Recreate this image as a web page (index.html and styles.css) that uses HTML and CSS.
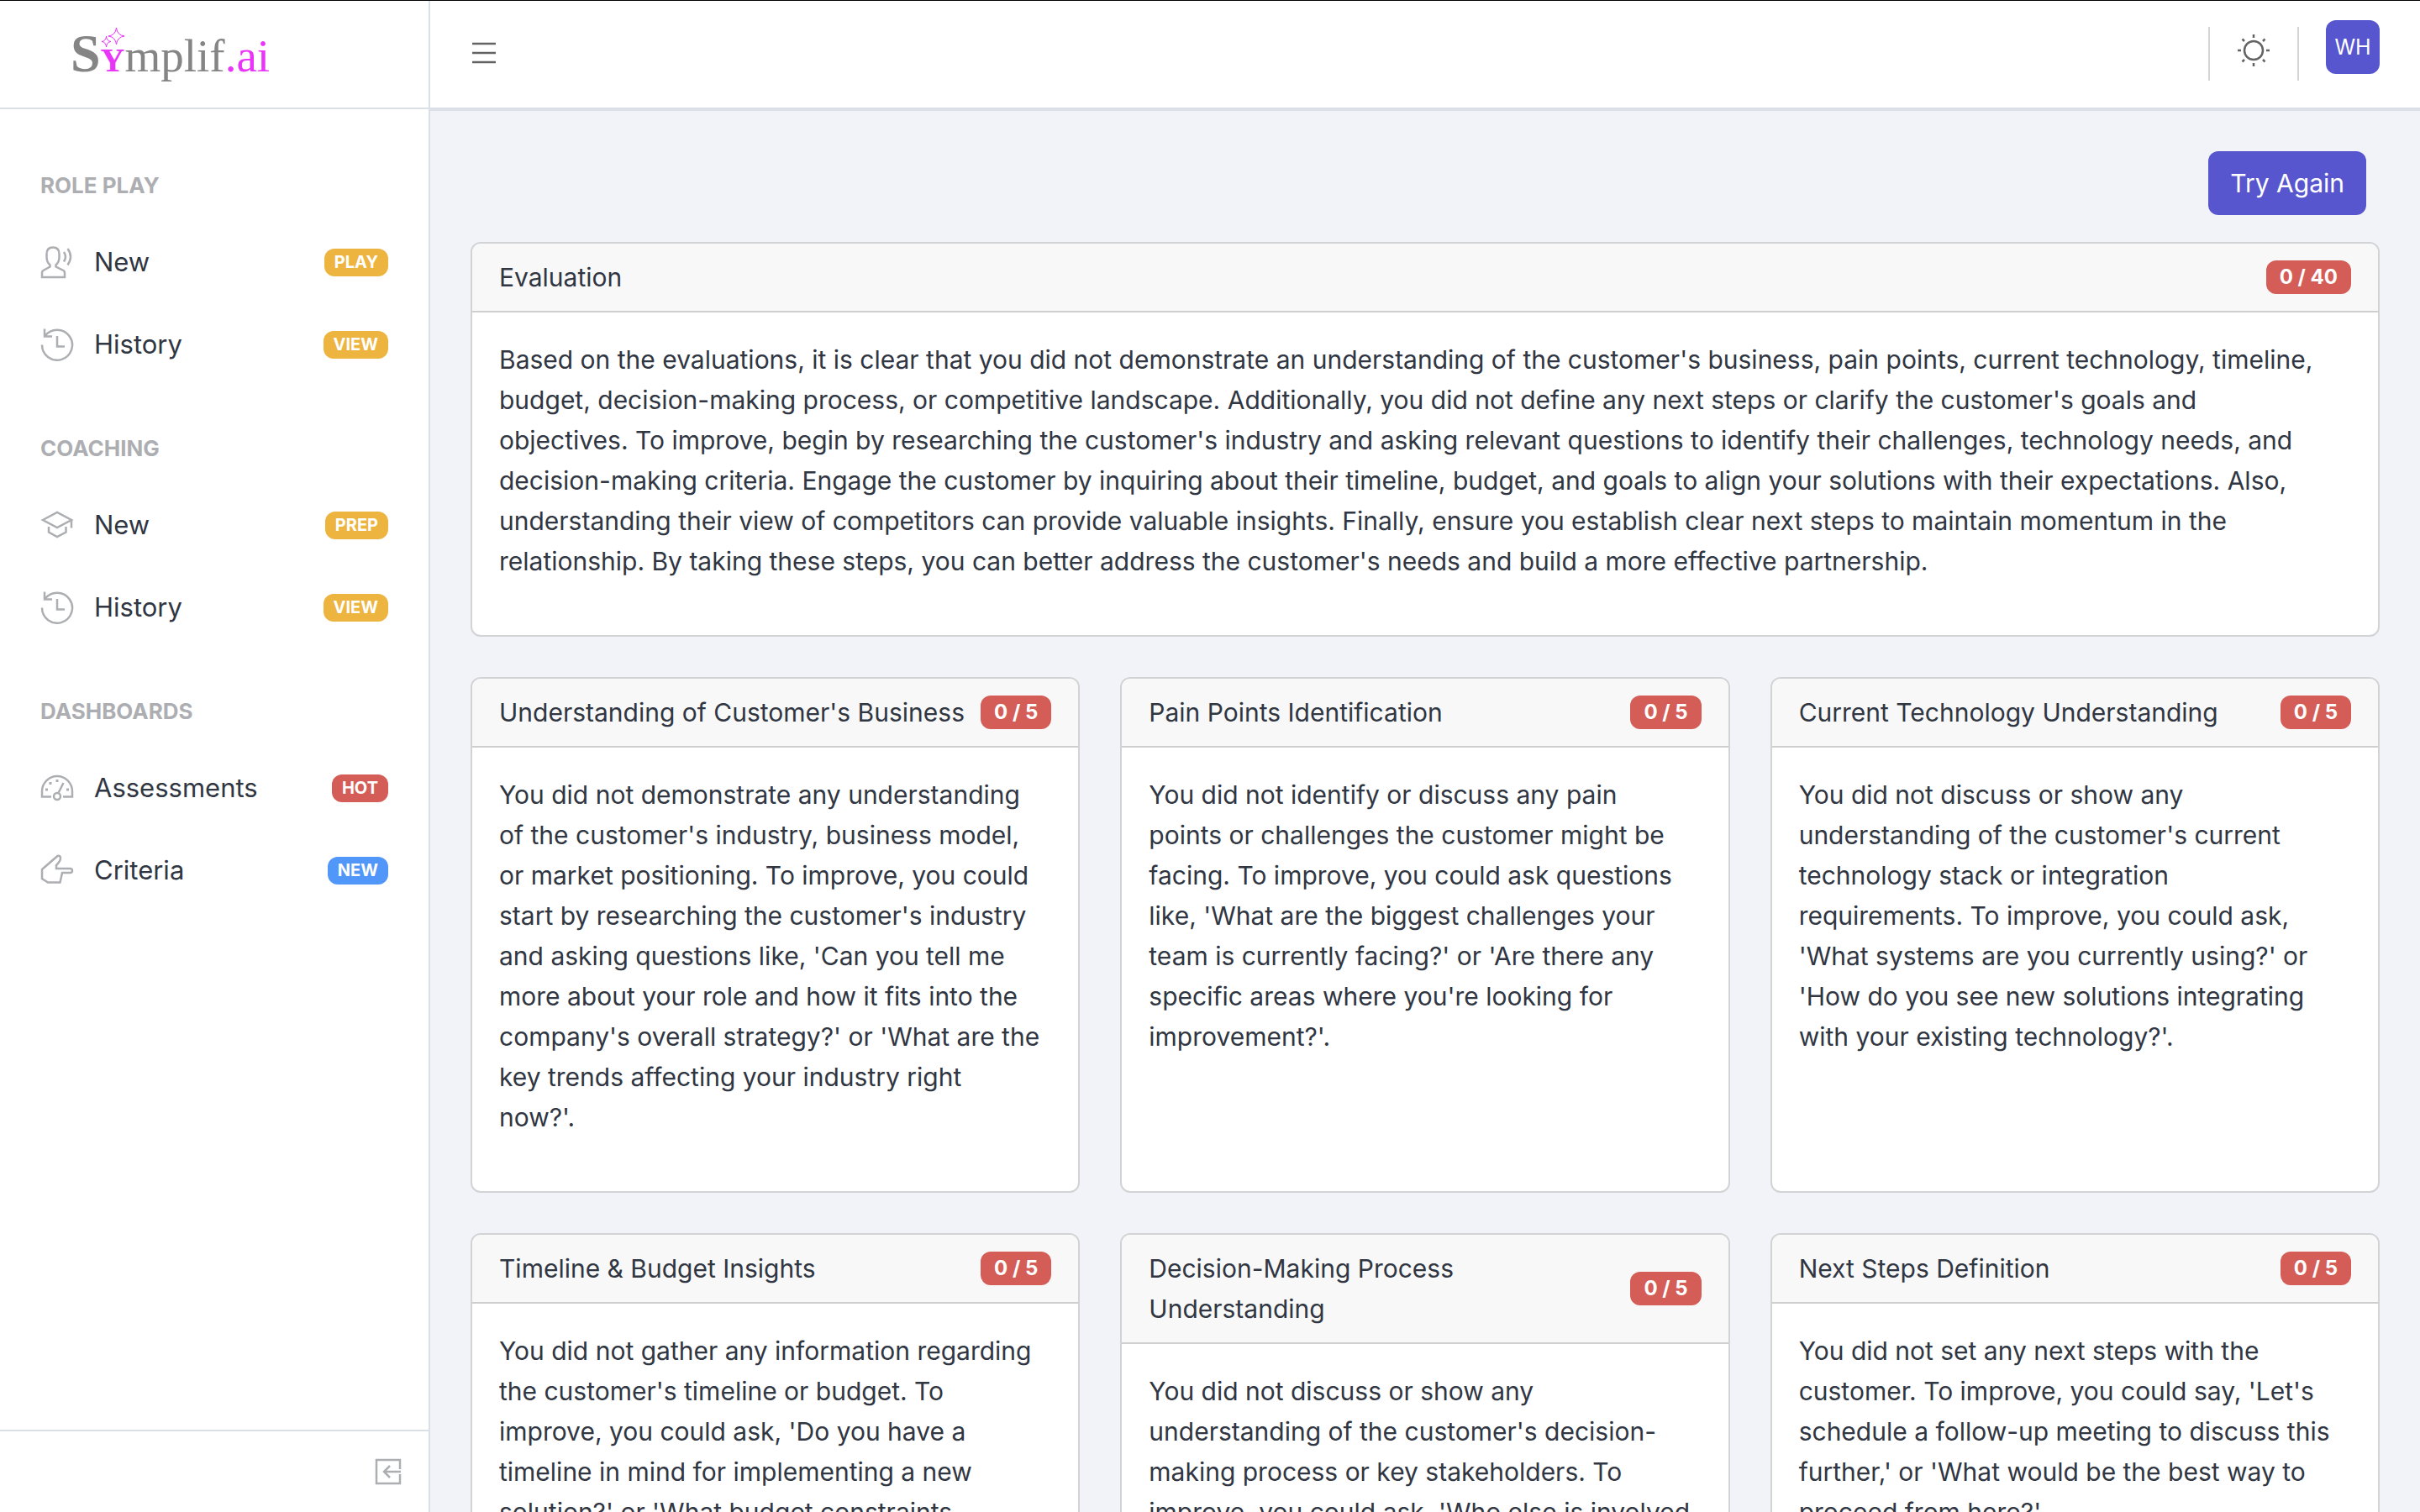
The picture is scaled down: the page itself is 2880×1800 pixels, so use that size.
FILE: index.html
```html
<!DOCTYPE html>
<html lang="en">
  <head>
    <meta charset="utf-8">
    <meta name="viewport" content="width=device-width, initial-scale=1">
    <title>Symplif.ai</title>
    <link rel="stylesheet" href="styles.css">
  </head>
  <body>
    <svg class="sprite" aria-hidden="true">
      <symbol id="icon-voice" viewBox="0 0 40 40">
        <path d="M2 38V32.500Q2 31 3.500 30L11.500 25.500V23.500Q7.500 20 7.500 14V10.500Q7.500 2.500 15 2.500T22.500 10.500V14Q22.500 20 18.500 23.500V25.500L27.500 30Q29 31 29 32.500V38Z"/>
        <path d="M28 8Q32 13.500 28 19.500M32.500 4Q39.500 13.500 32.500 23.500"/>
      </symbol>
      <symbol id="icon-history" viewBox="0 0 40 40">
        <path d="M5 1.500V10.500H14M5.500 10A18 18 0 1 1 2 20.500M20 10V22.500H29"/>
      </symbol>
      <symbol id="icon-cap" viewBox="0 0 40 40">
        <path d="M3 14L20 5L37 14L20 23ZM37 14V23.500M10 22V28.500L20 34L30.500 28.500V22"/>
      </symbol>
      <symbol id="icon-gauge" viewBox="0 0 40 40">
        <path d="M13 30.500H2V24A18 18 0 0 1 38 24V30.500H27M21.500 26L27.500 14"/>
        <circle cx="20" cy="30" r="4"/>
        <path d="M6 22H9M10.500 14.500H13.500M18.500 11.500H21.500M31 22H34" stroke-width="3"/>
      </symbol>
      <symbol id="icon-hand" viewBox="0 0 40 40">
        <path d="M2 19L20.500 3Q24 2 24 6Q24 9 19 14V18H35.500Q38 18 38 20.500T35.500 23H26L23.500 34.500H9L2 30Z"/>
      </symbol>
    </svg>

    <div class="app">
      <aside class="sidebar">
        <div class="sidebar-header">
          <a class="brand" href="#"><span class="brand-s">S</span><span class="brand-y">Y<svg class="brand-stars" viewBox="0 0 28 24"><path d="M18.500 0Q19.500 9 28 10Q19.500 11 18.500 20Q17.500 11 9 10Q17.500 9 18.500 0ZM6.500 10Q7 16 12 16.500Q7 17 6.500 23Q6 17 1 16.500Q6 16 6.500 10Z"/></svg></span>mplif<span class="brand-ai">.ai</span></a>
        </div>
        <nav class="sidebar-nav">
          <h6 class="nav-title">ROLE PLAY</h6>
          <a class="nav-link" href="#"><svg class="nav-icon"><use href="#icon-voice"/></svg>New<span class="badge badge-sm warning">PLAY</span></a>
          <a class="nav-link" href="#"><svg class="nav-icon"><use href="#icon-history"/></svg>History<span class="badge badge-sm warning">VIEW</span></a>
          <h6 class="nav-title">COACHING</h6>
          <a class="nav-link" href="#"><svg class="nav-icon"><use href="#icon-cap"/></svg>New<span class="badge badge-sm warning">PREP</span></a>
          <a class="nav-link" href="#"><svg class="nav-icon"><use href="#icon-history"/></svg>History<span class="badge badge-sm warning">VIEW</span></a>
          <h6 class="nav-title">DASHBOARDS</h6>
          <a class="nav-link" href="#"><svg class="nav-icon"><use href="#icon-gauge"/></svg>Assessments<span class="badge badge-sm danger">HOT</span></a>
          <a class="nav-link" href="#"><svg class="nav-icon"><use href="#icon-hand"/></svg>Criteria<span class="badge badge-sm info">NEW</span></a>
        </nav>
        <div class="sidebar-footer">
          <button class="icon-button" type="button" aria-label="Collapse sidebar">
            <svg class="fold-icon" viewBox="0 0 32 32"><path d="M30 13V2H2V30H30V19M31 16H11M18 9L11 16L18 23"/></svg>
          </button>
        </div>
      </aside>

      <div class="wrapper">
        <header class="header">
          <button class="icon-button" type="button" aria-label="Toggle sidebar">
            <svg class="menu-icon" viewBox="0 0 32 32"><path d="M2 5H30M2 16H30M2 27H30"/></svg>
          </button>
          <div class="header-tools">
            <span class="divider"></span>
            <button class="icon-button" type="button" aria-label="Theme">
              <svg class="sun-icon" viewBox="0 0 40 40"><circle cx="20" cy="20" r="11"/><path d="M20 1V5M20 35V39M1 20H5M35 20H39M6.500 6.500L9 9M31 31L33.500 33.500M33.500 6.500L31 9M9 31L6.500 33.500"/></svg>
            </button>
            <span class="divider"></span>
            <button class="avatar" type="button">WH</button>
          </div>
        </header>

        <main class="content">
          <div class="actions">
            <button class="btn-primary" type="button">Try Again</button>
          </div>

          <section class="card">
            <div class="card-header">Evaluation<span class="badge danger">0 / 40</span></div>
            <div class="card-body">
              <p>Based on the evaluations, it is clear that you did not demonstrate an understanding of the customer's business, pain points, current technology, timeline,<br>
              budget, decision-making process, or competitive landscape. Additionally, you did not define any next steps or clarify the customer's goals and<br>
              objectives. To improve, begin by researching the customer's industry and asking relevant questions to identify their challenges, technology needs, and<br>
              decision-making criteria. Engage the customer by inquiring about their timeline, budget, and goals to align your solutions with their expectations. Also,<br>
              understanding their view of competitors can provide valuable insights. Finally, ensure you establish clear next steps to maintain momentum in the<br>
              relationship. By taking these steps, you can better address the customer's needs and build a more effective partnership.</p>
            </div>
          </section>

          <div class="card-grid">
            <section class="card">
              <div class="card-header">Understanding of Customer's Business<span class="badge danger">0 / 5</span></div>
              <div class="card-body">
                <p>You did not demonstrate any understanding<br>
                of the customer's industry, business model,<br>
                or market positioning. To improve, you could start by researching the customer's industry and asking questions like, 'Can you tell me more about your role and how it fits into the company's overall strategy?' or 'What are the key trends affecting your industry right<br>
                now?'.</p>
              </div>
            </section>
            <section class="card">
              <div class="card-header">Pain Points Identification<span class="badge danger">0 / 5</span></div>
              <div class="card-body">
                <p>You did not identify or discuss any pain<br>
                points or challenges the customer might be facing. To improve, you could ask questions like, 'What are the biggest challenges your team is currently facing?' or 'Are there any specific areas where you're looking for improvement?'.</p>
              </div>
            </section>
            <section class="card">
              <div class="card-header">Current Technology Understanding<span class="badge danger">0 / 5</span></div>
              <div class="card-body">
                <p>You did not discuss or show any understanding of the customer's current technology stack or integration<br>
                requirements. To improve, you could ask,<br>
                'What systems are you currently using?' or<br>
                'How do you see new solutions integrating with your existing technology?'.</p>
              </div>
            </section>
            <section class="card">
              <div class="card-header">Timeline &amp; Budget Insights<span class="badge danger">0 / 5</span></div>
              <div class="card-body">
                <p>You did not gather any information regarding the customer's timeline or budget. To improve, you could ask, 'Do you have a timeline in mind for implementing a new solution?' or 'What budget constraints</p>
              </div>
            </section>
            <section class="card">
              <div class="card-header">Decision-Making Process Understanding<span class="badge danger">0 / 5</span></div>
              <div class="card-body">
                <p>You did not discuss or show any understanding of the customer's decision-making process or key stakeholders. To improve, you could ask, 'Who else is involved</p>
              </div>
            </section>
            <section class="card">
              <div class="card-header">Next Steps Definition<span class="badge danger">0 / 5</span></div>
              <div class="card-body">
                <p>You did not set any next steps with the customer. To improve, you could say, 'Let's schedule a follow-up meeting to discuss this further,' or 'What would be the best way to proceed from here?'.</p>
              </div>
            </section>
          </div>
        </main>
      </div>
    </div>
  </body>
</html>
```
FILE: styles.css
```css
* {
  box-sizing: border-box;
}
body {
  margin: 0;
  font-family: Inter, "Liberation Sans", sans-serif;
  font-size: 30px;
  line-height: 48px;
  color: #303642;
  background: #f2f3f8;
}
button {
  font: inherit;
  border: 0;
  cursor: pointer;
}
.sprite {
  display: none;
}
.app {
  display: flex;
  height: 100vh;
  border-top: 1px solid #000;
  overflow: hidden;
}

/* sidebar */
.sidebar {
  display: flex;
  flex-direction: column;
  flex: 0 0 512px;
  background: #fff;
  border-right: 2px solid #dbdfe6;
}
.sidebar-header {
  display: flex;
  align-items: center;
  height: 129px;
  padding: 6px 84px 0;
  border-bottom: 2px solid #dbdfe6;
}
.brand {
  font-family: "Liberation Serif", serif;
  font-size: 55px;
  line-height: 64px;
  color: #858585;
  text-decoration: none;
}
.brand-s {
  font-size: 64px;
  font-weight: bold;
}
.brand-y {
  position: relative;
  font-size: 40px;
  font-weight: bold;
  color: #e835f8;
}
.brand-ai {
  color: #e835f8;
}
.brand-stars {
  position: absolute;
  left: 0;
  top: -16px;
  width: 28px;
  height: 24px;
  fill: none;
  stroke: #e835f8;
}
.sidebar-nav {
  flex: 1;
  padding-top: 16px;
}
.nav-title {
  margin: 34px 0 0;
  padding: 22px 48px 24px;
  font-size: 26px;
  line-height: 37px;
  font-weight: 700;
  color: #adaeb2;
}
.nav-link {
  display: flex;
  align-items: center;
  height: 98px;
  padding: 0 48px;
  font-size: 31px;
  color: #303642;
  text-decoration: none;
}
.nav-icon {
  width: 40px;
  height: 40px;
  margin-right: 24px;
  fill: none;
  stroke: #adaeb2;
  stroke-width: 2.5;
}
.sidebar-footer {
  display: flex;
  align-items: center;
  justify-content: flex-end;
  height: 98px;
  padding: 0 32px;
  border-top: 2px solid #dbdfe6;
}
.badge {
  flex: none;
  margin-left: auto;
  padding: 8px 16px;
  border-radius: 12px;
  font-size: 24px;
  line-height: 24px;
  font-weight: 700;
  color: #fff;
}
.badge-sm {
  padding: 6px 12px;
  font-size: 20px;
  line-height: 21px;
}
.warning {
  background: #edb440;
}
.danger {
  background: #d45d57;
}
.info {
  background: #5196f9;
}

/* header */
.wrapper {
  display: flex;
  flex-direction: column;
  flex: 1;
  min-width: 0;
}
.header {
  display: flex;
  align-items: center;
  justify-content: space-between;
  flex: none;
  height: 131px;
  padding: 0 48px 4px;
  background: #fff;
  border-bottom: 4px solid #dbdfe6;
}
.header-tools {
  display: flex;
  align-items: flex-end;
  padding-bottom: 6px;
}
.icon-button {
  display: flex;
  padding: 0;
  background: none;
}
.menu-icon,
.fold-icon {
  width: 32px;
  height: 32px;
  fill: none;
  stroke: #636363;
  stroke-width: 2.5;
}
.fold-icon {
  stroke: #adaeb2;
}
.sun-icon {
  width: 40px;
  height: 40px;
  margin: 0 32px 16px;
  fill: none;
  stroke: #636363;
  stroke-width: 2.5;
}
.divider {
  width: 2px;
  height: 64px;
  background: #d5d5d6;
}
.avatar {
  width: 64px;
  height: 64px;
  margin: 0 0 8px 32px;
  padding: 0;
  border-radius: 12px;
  font-size: 25px;
  color: #fff;
  background: #5856cf;
}

/* content */
.content {
  flex: 1;
  padding: 48px;
  overflow: hidden;
}
.actions {
  display: flex;
  justify-content: flex-end;
  padding: 0 16px 32px;
}
.btn-primary {
  padding: 14px 26px;
  border-radius: 12px;
  color: #fff;
  background: #5856cf;
}
.card {
  background: #fff;
  border: 2px solid #d2d3d5;
  border-radius: 12px;
  overflow: hidden;
}
.card-header {
  display: flex;
  align-items: center;
  padding: 16px 32px;
  background: #f8f8f8;
  border-bottom: 2px solid #cfcfd0;
}
.card-body {
  padding: 32px;
}
.card-body p {
  margin: 0 0 32px;
}
.card-grid {
  display: grid;
  grid-template-columns: repeat(3, 1fr);
  gap: 48px;
  margin-top: 48px;
}
```
